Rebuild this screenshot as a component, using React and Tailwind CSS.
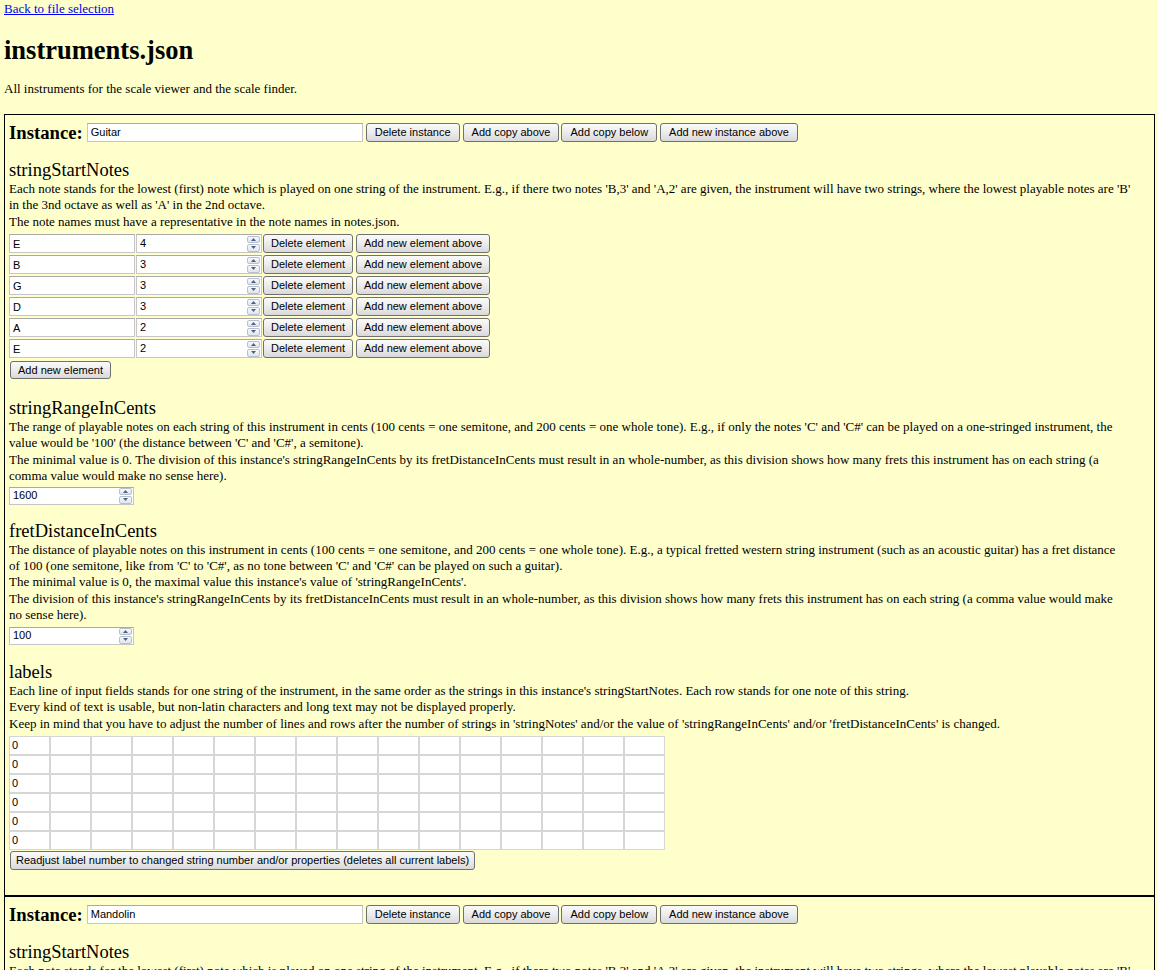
import { Fragment, useState } from 'react'

const ctrlFont = "font-['Liberation_Sans',Arial,sans-serif] text-[11px] text-black"
const btnClass = `h-[19px] shrink-0 border border-[#707070] rounded-[3px] bg-linear-to-b from-[#fafafa] via-[#ececec] to-[#d9d9d9] leading-none ${ctrlFont}`
const inputClass = `h-[19px] border border-[#c6c6c6] border-t-[#a9a9a9] bg-white px-[3px] outline-none ${ctrlFont}`

const guitar = {
  name: 'Guitar',
  notes: [['E', '4'], ['B', '3'], ['G', '3'], ['D', '3'], ['A', '2'], ['E', '2']],
  range: '1600',
  fret: '100',
}

const mandolin = {
  name: 'Mandolin',
  notes: [['E', '5'], ['A', '4'], ['D', '4'], ['G', '3']],
  range: '1500',
  fret: '100',
}

// descriptions, one entry per visual line (matches the original wrapping)
const startNotesText = [
  "Each note stands for the lowest (first) note which is played on one string of the instrument. E.g., if there two notes 'B,3' and 'A,2' are given, the instrument will have two strings, where the lowest playable notes are 'B'",
  "in the 3nd octave as well as 'A' in the 2nd octave.",
  'The note names must have a representative in the note names in notes.json.',
]

const rangeText = [
  "The range of playable notes on each string of this instrument in cents (100 cents = one semitone, and 200 cents = one whole tone). E.g., if only the notes 'C' and 'C#' can be played on a one-stringed instrument, the",
  "value would be '100' (the distance between 'C' and 'C#', a semitone).",
  "The minimal value is 0. The division of this instance's stringRangeInCents by its fretDistanceInCents must result in an whole-number, as this division shows how many frets this instrument has on each string (a",
  'comma value would make no sense here).',
]

const fretText = [
  'The distance of playable notes on this instrument in cents (100 cents = one semitone, and 200 cents = one whole tone). E.g., a typical fretted western string instrument (such as an acoustic guitar) has a fret distance',
  "of 100 (one semitone, like from 'C' to 'C#', as no tone between 'C' and 'C#' can be played on such a guitar).",
  "The minimal value is 0, the maximal value this instance's value of 'stringRangeInCents'.",
  "The division of this instance's stringRangeInCents by its fretDistanceInCents must result in an whole-number, as this division shows how many frets this instrument has on each string (a comma value would make",
  'no sense here).',
]

const labelsText = [
  "Each line of input fields stands for one string of the instrument, in the same order as the strings in this instance's stringStartNotes. Each row stands for one note of this string.",
  'Every kind of text is usable, but non-latin characters and long text may not be displayed properly.',
  "Keep in mind that you have to adjust the number of lines and rows after the number of strings in 'stringNotes' and/or the value of 'stringRangeInCents' and/or 'fretDistanceInCents' is changed.",
]

function Lines({ lines }) {
  return (
    <div>
      {lines.map((l, i) => (
        <Fragment key={i}>
          {i > 0 && <br />}
          {l}
        </Fragment>
      ))}
    </div>
  )
}

function Arrow({ up }) {
  return (
    <svg width="5" height="3" viewBox="0 0 5 3">
      <path d={up ? 'M0 3 L2.5 0 L5 3 Z' : 'M0 0 L2.5 3 L5 0 Z'} fill="#4f5f82" />
    </svg>
  )
}

function NumberField({ value, className }) {
  return (
    <div className={`flex items-center border border-[#c6c6c6] border-t-[#a9a9a9] bg-white ${className}`}>
      <span className={`flex-1 pl-[3px] ${ctrlFont}`}>{value}</span>
      <div className="mr-[1px] flex h-[16px] w-[13px] flex-col gap-[1px]">
        <span className="flex flex-1 items-center justify-center rounded-[2px] border border-[#b7c0cf] bg-linear-to-b from-[#f7f9fc] to-[#dfe5ee]">
          <Arrow up />
        </span>
        <span className="flex flex-1 items-center justify-center rounded-[2px] border border-[#b7c0cf] bg-linear-to-b from-[#f7f9fc] to-[#dfe5ee]">
          <Arrow />
        </span>
      </div>
    </div>
  )
}

function Heading({ children, className = '' }) {
  return <h3 className={`text-[18.5px] font-normal leading-[22px] ${className}`}>{children}</h3>
}

function Instance({ data }) {
  const [name, setName] = useState(data.name)

  return (
    <div className="border border-black px-[4px] pt-[8px] pb-[25px]">
      {/* header row */}
      <div className="flex items-center">
        <span className="mr-[4px] text-[18.7px] font-bold leading-[19px]">Instance:</span>
        <input
          value={name}
          onChange={(e) => setName(e.target.value)}
          className={`w-[276px] ${inputClass}`}
        />
        <button className={`ml-[3px] px-[8px] ${btnClass}`}>Delete instance</button>
        <button className={`ml-[3px] px-[8px] ${btnClass}`}>Add copy above</button>
        <button className={`ml-[2px] px-[8px] ${btnClass}`}>Add copy below</button>
        <button className={`ml-[3px] px-[8px] ${btnClass}`}>Add new instance above</button>
      </div>

      {/* stringStartNotes */}
      <Heading className="mt-[17px]">stringStartNotes</Heading>
      <Lines lines={startNotesText} />
      <div className="mt-[4px] flex flex-col gap-[2px]">
        {data.notes.map(([note, octave], i) => (
          <div key={i} className="flex items-center">
            <input defaultValue={note} className={`w-[126px] ${inputClass}`} />
            <NumberField value={octave} className="ml-[1px] h-[19px] w-[126px]" />
            <button className={`ml-[1px] px-[7px] ${btnClass}`}>Delete element</button>
            <button className={`ml-[3px] px-[7px] ${btnClass}`}>Add new element above</button>
          </div>
        ))}
      </div>
      <button className={`mt-[3px] ml-[1px] px-[7px] !h-[18px] ${btnClass}`}>Add new element</button>

      {/* stringRangeInCents */}
      <Heading className="mt-[18px]">stringRangeInCents</Heading>
      <Lines lines={rangeText} />
      <NumberField value={data.range} className="mt-[2px] h-[18px] w-[125px]" />

      {/* fretDistanceInCents */}
      <Heading className="mt-[15px]">fretDistanceInCents</Heading>
      <Lines lines={fretText} />
      <NumberField value={data.fret} className="mt-[3px] h-[18px] w-[125px]" />

      {/* labels */}
      <Heading className="mt-[16px]">labels</Heading>
      <Lines lines={labelsText} />
      <div className="mt-[4px] flex flex-col">
        {data.notes.map((_, r) => (
          <div key={r} className="flex">
            {Array.from({ length: 16 }).map((_, c) => (
              <input
                key={c}
                defaultValue={c === 0 ? '0' : ''}
                className={`h-[19px] w-[41px] border border-[#d6d6d6] bg-white px-[2px] outline-none ${ctrlFont}`}
              />
            ))}
          </div>
        ))}
      </div>
      <button className={`mt-[1px] ml-[1px] px-[5px] ${btnClass}`}>
        Readjust label number to changed string number and/or properties (deletes all current labels)
      </button>
    </div>
  )
}

export default function App() {
  return (
    <div className="min-h-screen bg-[#ffffcc] pl-[4px] pr-[2px] pt-[1px] font-['Liberation_Serif','Times_New_Roman',serif] text-[13px] leading-[16.4px] text-black">
      <a href="#" className="text-[#0000ee] underline">Back to file selection</a>
      <h1 className="mt-[18px] text-[26.5px] font-bold leading-[30px]">instruments.json</h1>
      <p className="mt-[16px]">All instruments for the scale viewer and the scale finder.</p>
      <div className="mt-[16px]">
        <Instance data={guitar} />
        <Instance data={mandolin} />
      </div>
    </div>
  )
}
